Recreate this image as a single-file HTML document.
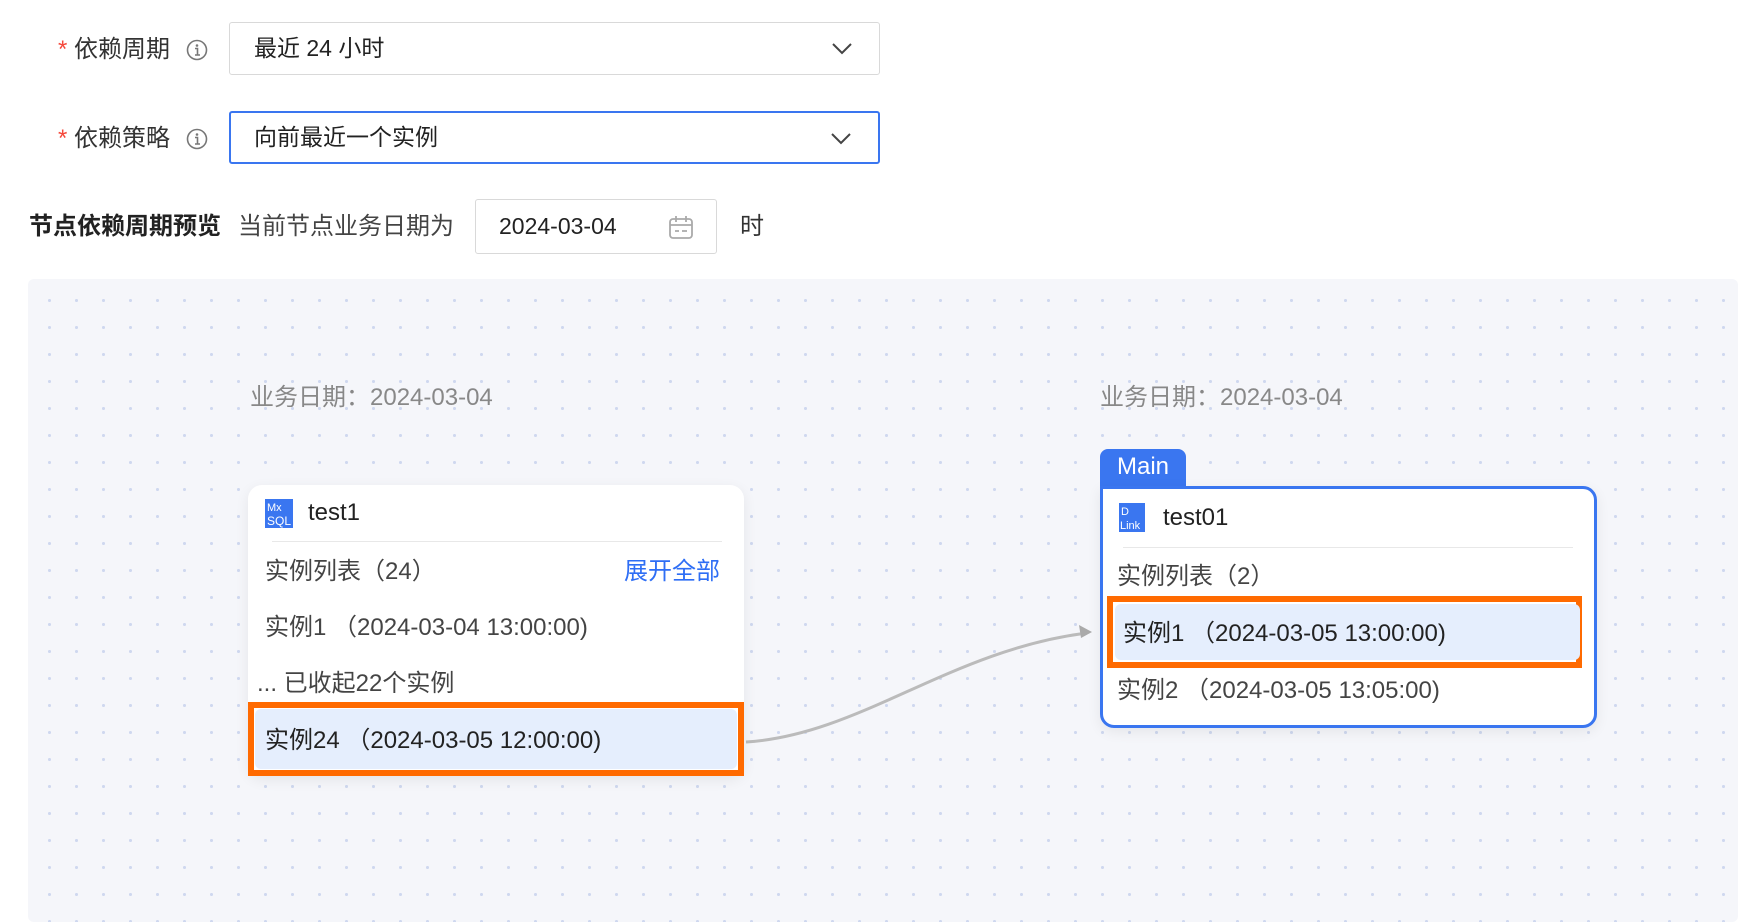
<!DOCTYPE html>
<html><head><meta charset="utf-8"><style>
body{margin:0;width:1754px;height:924px;background:#fff;position:relative;overflow:hidden;font-family:"Liberation Sans","Noto Sans CJK SC",sans-serif;color:#333;}
.a{position:absolute;white-space:nowrap;}
.lbl{font-size:24px;color:#333;line-height:30px;}
.star{color:#f5483b;}
.sel{position:absolute;left:229px;width:651px;height:53px;border:1px solid #d9d9d9;border-radius:3px;box-sizing:border-box;font-size:23px;line-height:51px;padding-left:24px;color:#222;}
.sel svg{position:absolute;right:26px;top:18px;}
.canvas{position:absolute;left:28px;top:279px;background-color:#f5f6fa;background-image:radial-gradient(circle,#cfd8ef 1.4px,transparent 1.7px);background-size:27px 27px;background-position:8px 8px;border-radius:6px;}
.card{position:absolute;background:#fff;border-radius:14px;box-shadow:0 4px 14px rgba(0,0,0,.07);}
.t{font-size:24px;line-height:30px;color:#444;}
.dk{color:#222;}
</style></head><body>
<div class="a lbl" style="left:58px;top:35px"><span class="star">*</span> 依赖周期</div>
<svg class="a" style="left:186px;top:39px" width="22" height="22"><circle cx="11" cy="11" r="9.5" fill="none" stroke="#777" stroke-width="1.6"/><circle cx="11" cy="6.5" r="1.3" fill="#777"/><path d="M9 9.5h2.5v6.5M9 16h5" stroke="#777" stroke-width="1.6" fill="none"/></svg>
<div class="sel" style="top:22px">最近 24 小时<svg width="22" height="14"><path d="M2 3l9 9 9-9" stroke="#444" stroke-width="2" fill="none"/></svg></div>
<div class="a lbl" style="left:58px;top:124px"><span class="star">*</span> 依赖策略</div>
<svg class="a" style="left:186px;top:128px" width="22" height="22"><circle cx="11" cy="11" r="9.5" fill="none" stroke="#777" stroke-width="1.6"/><circle cx="11" cy="6.5" r="1.3" fill="#777"/><path d="M9 9.5h2.5v6.5M9 16h5" stroke="#777" stroke-width="1.6" fill="none"/></svg>
<div class="sel" style="top:111px;border:2px solid #3a76f0;line-height:49px;padding-left:23px">向前最近一个实例<svg width="22" height="14"><path d="M2 3l9 9 9-9" stroke="#444" stroke-width="2" fill="none"/></svg></div>
<div class="a lbl" style="left:29px;top:212px;font-weight:bold;color:#222">节点依赖周期预览</div>
<div class="a lbl" style="left:238px;top:212px;color:#444">当前节点业务日期为</div>
<div class="a" style="left:475px;top:199px;width:242px;height:55px;border:1px solid #d9d9d9;border-radius:3px;box-sizing:border-box;font-size:23px;line-height:53px;padding-left:23px;color:#222">2024-03-04
<svg style="position:absolute;right:22px;top:14px" width="26" height="26"><rect x="2" y="5" width="22" height="19" rx="3" fill="none" stroke="#aaa" stroke-width="1.8"/><path d="M2 11h22M8 2v6M18 2v6M7 17h4M14 17h5" stroke="#aaa" stroke-width="1.8"/></svg></div>
<div class="a lbl" style="left:740px;top:212px">时</div>
<div class="canvas" style="width:1710px;height:643px"></div>
<div class="a t" style="left:250px;top:383px;color:#888">业务日期：2024-03-04</div>
<div class="a t" style="left:1100px;top:383px;color:#888">业务日期：2024-03-04</div>
<svg class="a" style="left:0;top:0" width="1754" height="924"><path d="M746 742 C 860 735, 950 650, 1087 633" stroke="#bbb" stroke-width="3" fill="none"/><path d="M1092 632 l-13 -7 l2 13z" fill="#aaa"/></svg>
<div class="card" style="left:248px;top:485px;width:496px;height:291px">
 <svg class="a" style="left:17px;top:14px" width="28" height="29"><rect width="28" height="29" fill="#3a76f0"/><text x="2" y="12" font-size="11" fill="#fff" font-family="Liberation Sans">Mx</text><text x="2" y="26" font-size="12" fill="#fff" font-family="Liberation Sans">SQL</text></svg>
 <div class="a dk" style="left:60px;top:13px;font-size:24px;line-height:30px">test1</div>
 <div class="a" style="left:24px;top:56px;width:450px;height:1px;background:#e8e8e8"></div>
 <div class="a t" style="left:17px;top:72px">实例列表（24）</div>
 <div class="a t" style="left:376px;top:72px;color:#2e6ef5">展开全部</div>
 <div class="a t" style="left:17px;top:128px">实例1 （2024-03-04 13:00:00)</div>
 <div class="a t" style="left:9px;top:184px">... 已收起22个实例</div>
 <div class="a" style="left:0;top:217px;width:496px;height:74px;border:6px solid #ff6a00;box-sizing:border-box;background:#fff"><div style="position:absolute;left:1px;top:1px;right:1px;bottom:1px;background:#e5eefd;border-radius:6px"></div><div class="a t dk" style="left:11px;top:18px">实例24 （2024-03-05 12:00:00)</div></div>
</div>
<div class="a" style="left:1100px;top:449px;width:86px;height:42px;background:#3a76f0;border-radius:8px 8px 0 0;color:#fff;font-size:24px;line-height:36px;text-align:center">Main</div>
<div class="card" style="left:1100px;top:486px;width:497px;height:242px;border:3px solid #3a76f0;box-sizing:border-box;border-radius:0 14px 14px 14px">
 <svg class="a" style="left:16px;top:14px" width="26" height="29"><rect width="26" height="29" fill="#3a76f0"/><text x="2" y="12" font-size="11" fill="#fff" font-family="Liberation Sans">D</text><text x="1" y="26" font-size="11" fill="#fff" font-family="Liberation Sans">Link</text></svg>
 <div class="a dk" style="left:60px;top:14px;font-size:24px;line-height:30px">test01</div>
 <div class="a" style="left:20px;top:58px;width:450px;height:1px;background:#e8e8e8"></div>
 <div class="a t" style="left:14px;top:73px">实例列表（2）</div>
 <div class="a" style="left:4px;top:107px;width:475px;height:72px;border:6px solid #ff6a00;box-sizing:border-box"><div style="position:absolute;left:2px;top:2px;right:-4px;bottom:2px;background:#e5eefd;border-radius:6px"></div><div class="a t dk" style="left:10px;top:17px">实例1 （2024-03-05 13:00:00)</div></div>
 <div class="a t" style="left:14px;top:187px">实例2 （2024-03-05 13:05:00)</div>
</div>
</body></html>
